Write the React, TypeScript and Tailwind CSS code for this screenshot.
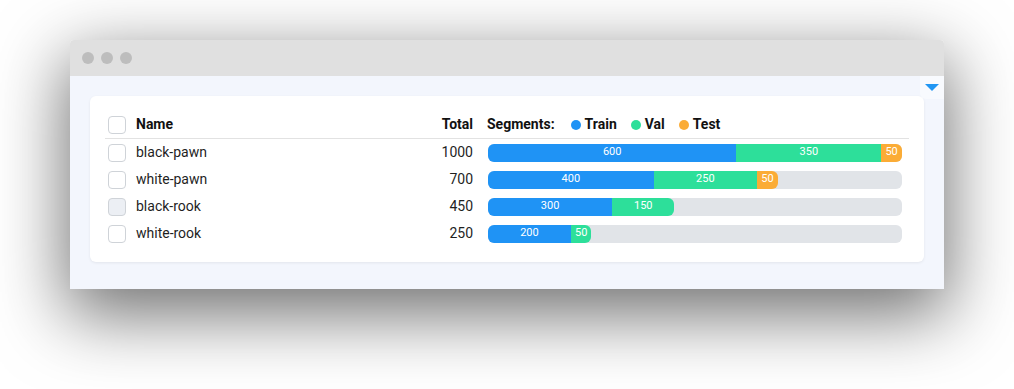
import React from 'react';

type Row = {
  name: string;
  total: number;
  train: number;
  val: number;
  test: number;
  muted?: boolean;
};

const rows: Row[] = [
  { name: 'black-pawn', total: 1000, train: 600, val: 350, test: 50 },
  { name: 'white-pawn', total: 700, train: 400, val: 250, test: 50 },
  { name: 'black-rook', total: 450, train: 300, val: 150, test: 0, muted: true },
  { name: 'white-rook', total: 250, train: 200, val: 50, test: 0 },
];

const MAX = 1000;
const BAR_W = 414;

const Checkbox = ({ muted }: { muted?: boolean }) => (
  <div
    className={`w-[18px] h-[18px] rounded-[4px] border border-[#cfd3d8] ${muted ? 'bg-[#eceff4]' : 'bg-white'}`}
  />
);

const Segment = ({ value, color }: { value: number; color: string }) => {
  if (!value) return null;
  // width comes from data
  return (
    <div
      className={`h-full flex items-center justify-center text-[11px] text-white shrink-0 ${color}`}
      style={{ width: (value / MAX) * BAR_W }}
    >
      {value}
    </div>
  );
};

const Legend = ({ dot, label }: { dot: string; label: string }) => (
  <div className="flex items-center gap-[4px]">
    <span className={`w-[10px] h-[10px] rounded-full ${dot}`} />
    <span>{label}</span>
  </div>
);

export default function App() {
  return (
    <div className="w-[1014px] h-[389px] bg-white pt-[40px] pl-[70px] font-['Roboto','Liberation_Sans',sans-serif]">
      <div className="w-[874px] rounded-t-[4px] overflow-hidden shadow-[0_22px_70px_4px_rgba(0,0,0,0.56)]">
        <div className="h-[36px] bg-[#e0e0e0] flex items-center gap-[7px] pl-[12px]">
          <span className="w-[12px] h-[12px] rounded-full bg-[#bdbdbd]" />
          <span className="w-[12px] h-[12px] rounded-full bg-[#bdbdbd]" />
          <span className="w-[12px] h-[12px] rounded-full bg-[#bdbdbd]" />
        </div>

        <div className="relative h-[213px] bg-[#f3f6fd] pt-[20px] pl-[20px] pr-[20px]">
          <div className="absolute top-0 right-0 w-[24px] h-[23px] bg-[#f8fafe] rounded-bl-[6px] flex items-center justify-center z-10">
            <svg width="14" height="7" viewBox="0 0 14 7" className="mt-[-1px]">
              <polygon points="0,0 14,0 7,7" fill="#2196f3" />
            </svg>
          </div>

          <div className="bg-white rounded-[6px] shadow-[0_1px_3px_rgba(0,0,0,0.07)] px-[15px] pt-[15px] pb-[15px] text-[14px] text-[#1f1f1f]">
            <div className="h-[28px] flex items-center border-b border-[#e2e2e2] font-bold text-[#111]">
              <div className="pl-[3px] w-[31px]">
                <Checkbox />
              </div>
              <div className="flex-1">Name</div>
              <div className="w-[60px] text-right">Total</div>
              <div className="w-[436px] pl-[14px] flex items-center">
                <span className="mr-[16px]">Segments:</span>
                <div className="flex items-center gap-[14px]">
                  <Legend dot="bg-[#1f93f5]" label="Train" />
                  <Legend dot="bg-[#2ddf9a]" label="Val" />
                  <Legend dot="bg-[#fbac36]" label="Test" />
                </div>
              </div>
            </div>

            {rows.map((row) => (
              <div key={row.name} className="h-[27px] flex items-center">
                <div className="pl-[3px] w-[31px]">
                  <Checkbox muted={row.muted} />
                </div>
                <div className="flex-1">{row.name}</div>
                <div className="w-[60px] text-right">{row.total}</div>
                <div className="w-[436px] pl-[15px]">
                  <div className="w-[414px] h-[18px] rounded-[6px] bg-[#e1e4e8]">
                    <div className="h-full inline-flex rounded-[6px] overflow-hidden align-top">
                      <Segment value={row.train} color="bg-[#1f93f5]" />
                      <Segment value={row.val} color="bg-[#2ddf9a]" />
                      <Segment value={row.test} color="bg-[#fbac36]" />
                    </div>
                  </div>
                </div>
              </div>
            ))}
          </div>
        </div>
      </div>
    </div>
  );
}
